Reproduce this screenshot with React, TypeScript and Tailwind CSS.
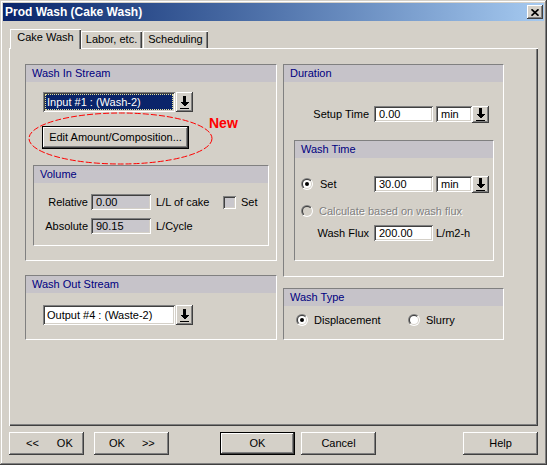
import React from "react"

// classic 3D bevels
const raised = "shadow-[inset_-1px_-1px_#404040,inset_1px_1px_#ffffff,inset_-2px_-2px_#808080]"
const sunken = "shadow-[inset_1px_1px_#808080,inset_-1px_-1px_#ffffff,inset_2px_2px_#404040,inset_-2px_-2px_#d4d0c8]"

function DownArrow() {
  return (
    <svg width="9" height="13" viewBox="0 0 9 13" shapeRendering="crispEdges">
      <rect x="3" y="0" width="3" height="6" fill="#000" />
      <polygon points="0,6 9,6 4.5,10.5" fill="#000" />
      <rect x="0" y="12" width="9" height="1" fill="#000" />
    </svg>
  )
}

function DropButton({ tall }: { tall?: boolean }) {
  return (
    <div className={`${raised} bg-[#d4d0c8] w-[17px] ${tall ? "h-[20px]" : "h-[17px]"} flex items-center justify-center`}>
      <DownArrow />
    </div>
  )
}

function CloseGlyph() {
  return (
    <svg width="8" height="7" viewBox="0 0 8 7">
      <path d="M0.5 0.3 L7.5 6.7 M7.5 0.3 L0.5 6.7" stroke="#000" strokeWidth="1.7" />
    </svg>
  )
}

function Radio({ checked, disabled }: { checked?: boolean; disabled?: boolean }) {
  return (
    <svg width="12" height="12" viewBox="0 0 12 12" className="shrink-0">
      <defs>
        <linearGradient id="radioOuter" x1="0" y1="0" x2="1" y2="1">
          <stop offset="0.5" stopColor="#808080" />
          <stop offset="0.5" stopColor="#ffffff" />
        </linearGradient>
        <linearGradient id="radioInner" x1="0" y1="0" x2="1" y2="1">
          <stop offset="0.5" stopColor="#404040" />
          <stop offset="0.5" stopColor="#d4d0c8" />
        </linearGradient>
      </defs>
      <circle cx="6" cy="6" r="6" fill="url(#radioOuter)" />
      <circle cx="6" cy="6" r="5" fill="url(#radioInner)" />
      <circle cx="6" cy="6" r="4" fill={disabled ? "#d4d0c8" : "#ffffff"} />
      {checked && <circle cx="6" cy="6" r="2" fill="#000" />}
    </svg>
  )
}

function GroupBox({ title, className, children }: { title: string; className: string; children?: React.ReactNode }) {
  return (
    <div className={`relative flex flex-col border border-t-[#808080] border-l-[#808080] border-b-white border-r-white ${className}`}>
      <div className="h-[17px] shrink-0 bg-[#c6c3c9] pl-[6px] leading-[17px] text-[#000080]">{title}</div>
      {children}
    </div>
  )
}

function TextBox({ value, width, gray }: { value: string; width: string; gray?: boolean }) {
  return (
    <div className={`${sunken} ${width} h-[16px] pl-[5px] leading-[16px] ${gray ? "bg-[#c9c7cc]" : "bg-white"}`}>
      {value}
    </div>
  )
}

function UnitSelect({ value }: { value: string }) {
  return (
    <div className="flex items-start">
      <div className={`${sunken} w-[36px] h-[16px] bg-white pl-[5px] leading-[16px]`}>{value}</div>
      <DropButton />
    </div>
  )
}

function Button({ children, isDefault, className = "" }: { children: React.ReactNode; isDefault?: boolean; className?: string }) {
  return (
    <div
      className={`h-[23px] bg-[#d4d0c8] flex items-center justify-center ${isDefault ? "border border-black" : ""} ${raised} ${className}`}
    >
      {children}
    </div>
  )
}

export default function App() {
  return (
    <div className="w-[547px] h-[465px] bg-[#d4d0c8] p-[3px] font-['Liberation_Sans',Arial,sans-serif] text-[11px] leading-[13px] text-black shadow-[inset_-1px_-1px_#404040,inset_1px_1px_#d4d0c8,inset_-2px_-2px_#808080,inset_2px_2px_#ffffff] flex flex-col overflow-hidden">
      {/* Title bar */}
      <div className="h-[18px] shrink-0 flex items-center bg-linear-to-r from-[#0a246a] to-[#a6caf0]">
        <span className="pl-[2px] text-[12px] font-bold text-white leading-none">Prod Wash (Cake Wash)</span>
        <div className={`ml-auto mr-[1px] w-[16px] h-[14px] bg-[#d4d0c8] flex items-center justify-center ${raised}`}>
          <CloseGlyph />
        </div>
      </div>

      {/* Tabs */}
      <div className="mt-[8px] h-[19px] shrink-0 flex items-end pl-[7px]">
        <div className="relative z-10 -mb-px w-[71px] h-[20px] bg-[#d4d0c8] pt-[2px] text-center shadow-[inset_1px_1px_#ffffff,inset_-1px_0_#404040,inset_-2px_0_#808080]">
          Cake Wash
        </div>
        <div className="w-[61px] h-[17px] pt-[2px] text-center shadow-[inset_1px_1px_#ffffff,inset_-1px_0_#404040,inset_-2px_0_#808080]">
          Labor, etc.
        </div>
        <div className="ml-[1px] w-[65px] h-[17px] pt-[2px] text-center shadow-[inset_1px_1px_#ffffff,inset_-1px_0_#404040,inset_-2px_0_#808080]">
          Scheduling
        </div>
      </div>

      {/* Tab page */}
      <div className="ml-[6px] w-[529px] h-[378px] shrink-0 flex gap-[6px] pl-[16px] pt-[16px] shadow-[inset_1px_1px_#ffffff,inset_-1px_-1px_#404040,inset_-2px_-2px_#808080]">
        {/* left column */}
        <div className="w-[252px] flex flex-col">
          <GroupBox title="Wash In Stream" className="h-[197px]">
            <div className="mt-[10px] ml-[17px] flex gap-[1px]">
              <div className={`${sunken} w-[132px] h-[20px] p-[2px]`}>
                <div className="h-full bg-[#0a246a] border border-dotted border-[#e6e39a] pl-px leading-[14px] text-white">
                  Input #1 : (Wash-2)
                </div>
              </div>
              <DropButton tall />
            </div>
            <Button isDefault className="mt-[14px] ml-[16px] w-[147px]">
              Edit Amount/Composition...
            </Button>

            {/* annotation */}
            <svg width="185" height="53" viewBox="0 0 185 53" className="absolute left-[2px] top-[47px]">
              <ellipse cx="92.5" cy="26.5" rx="91.5" ry="25.5" fill="none" stroke="#ff0000" strokeWidth="1" strokeDasharray="6 2" />
            </svg>
            <span className="absolute left-[183px] top-[51px] text-[14px] font-bold leading-none text-[#ff0000]">New</span>

            <GroupBox title="Volume" className="mt-[16px] ml-[7px] w-[236px] h-[81px]">
              <div className="mt-[11px] flex items-center h-[16px]">
                <span className="w-[54px] text-right">Relative</span>
                <div className="ml-[3px]">
                  <TextBox value="0.00" width="w-[60px]" gray />
                </div>
                <span className="ml-[5px] w-[67px]">L/L of cake</span>
                <div className={`${sunken} w-[13px] h-[13px] bg-[#c9c7cc]`} />
                <span className="ml-[5px]">Set</span>
              </div>
              <div className="mt-[8px] flex items-center h-[16px]">
                <span className="w-[54px] text-right">Absolute</span>
                <div className="ml-[3px]">
                  <TextBox value="90.15" width="w-[60px]" gray />
                </div>
                <span className="ml-[5px]">L/Cycle</span>
              </div>
            </GroupBox>
          </GroupBox>

          <GroupBox title="Wash Out Stream" className="mt-[14px] h-[65px]">
            <div className="mt-[12px] ml-[17px] flex gap-[1px]">
              <div className={`${sunken} w-[132px] h-[20px] pl-[4px] leading-[20px] bg-white`}>
                Output #4 : (Waste-2)
              </div>
              <DropButton tall />
            </div>
          </GroupBox>
        </div>

        {/* right column */}
        <div className="w-[221px] flex flex-col">
          <GroupBox title="Duration" className="h-[213px]">
            <div className="mt-[24px] flex items-start">
              <span className="w-[85px] text-right leading-[16px]">Setup Time</span>
              <div className="ml-[5px]">
                <TextBox value="0.00" width="w-[59px]" />
              </div>
              <div className="ml-[3px]">
                <UnitSelect value="min" />
              </div>
            </div>

            <GroupBox title="Wash Time" className="mt-[17px] ml-[10px] w-[200px] h-[121px]">
              <div className="mt-[18px] flex items-start">
                <div className="pl-[6px] w-[79px] h-[16px] flex items-center">
                  <Radio checked />
                  <span className="ml-[7px]">Set</span>
                </div>
                <TextBox value="30.00" width="w-[59px]" />
                <div className="ml-[3px]">
                  <UnitSelect value="min" />
                </div>
              </div>
              <div className="mt-[11px] pl-[6px] h-[14px] flex items-center">
                <Radio disabled />
                <span className="ml-[6px] text-[#808080] [text-shadow:1px_1px_0_#ffffff]">Calculate based on wash flux</span>
              </div>
              <div className="mt-[7px] flex items-center h-[16px]">
                <span className="w-[74px] text-right">Wash Flux</span>
                <div className="ml-[5px]">
                  <TextBox value="200.00" width="w-[59px]" />
                </div>
                <span className="ml-[3px]">L/m2-h</span>
              </div>
            </GroupBox>
          </GroupBox>

          <GroupBox title="Wash Type" className="mt-[11px] h-[52px]">
            <div className="mt-[7px] pl-[12px] h-[14px] flex items-center">
              <div className="w-[112px] flex items-center">
                <Radio checked />
                <span className="ml-[6px]">Displacement</span>
              </div>
              <Radio />
              <span className="ml-[6px]">Slurry</span>
            </div>
          </GroupBox>
        </div>
      </div>

      {/* Dialog buttons */}
      <div className="mt-[6px] pl-[6px] flex">
        <Button className="w-[75px] !justify-start pl-[17px]">
          <span>&lt;&lt;</span>
          <span className="ml-[18px]">OK</span>
        </Button>
        <Button className="ml-[10px] w-[75px] !justify-start pl-[15px]">
          <span>OK</span>
          <span className="ml-[17px]">&gt;&gt;</span>
        </Button>
        <Button isDefault className="ml-[51px] w-[75px]">
          OK
        </Button>
        <Button className="ml-[6px] w-[75px]">Cancel</Button>
        <Button className="ml-[87px] w-[75px]">Help</Button>
      </div>
    </div>
  )
}
